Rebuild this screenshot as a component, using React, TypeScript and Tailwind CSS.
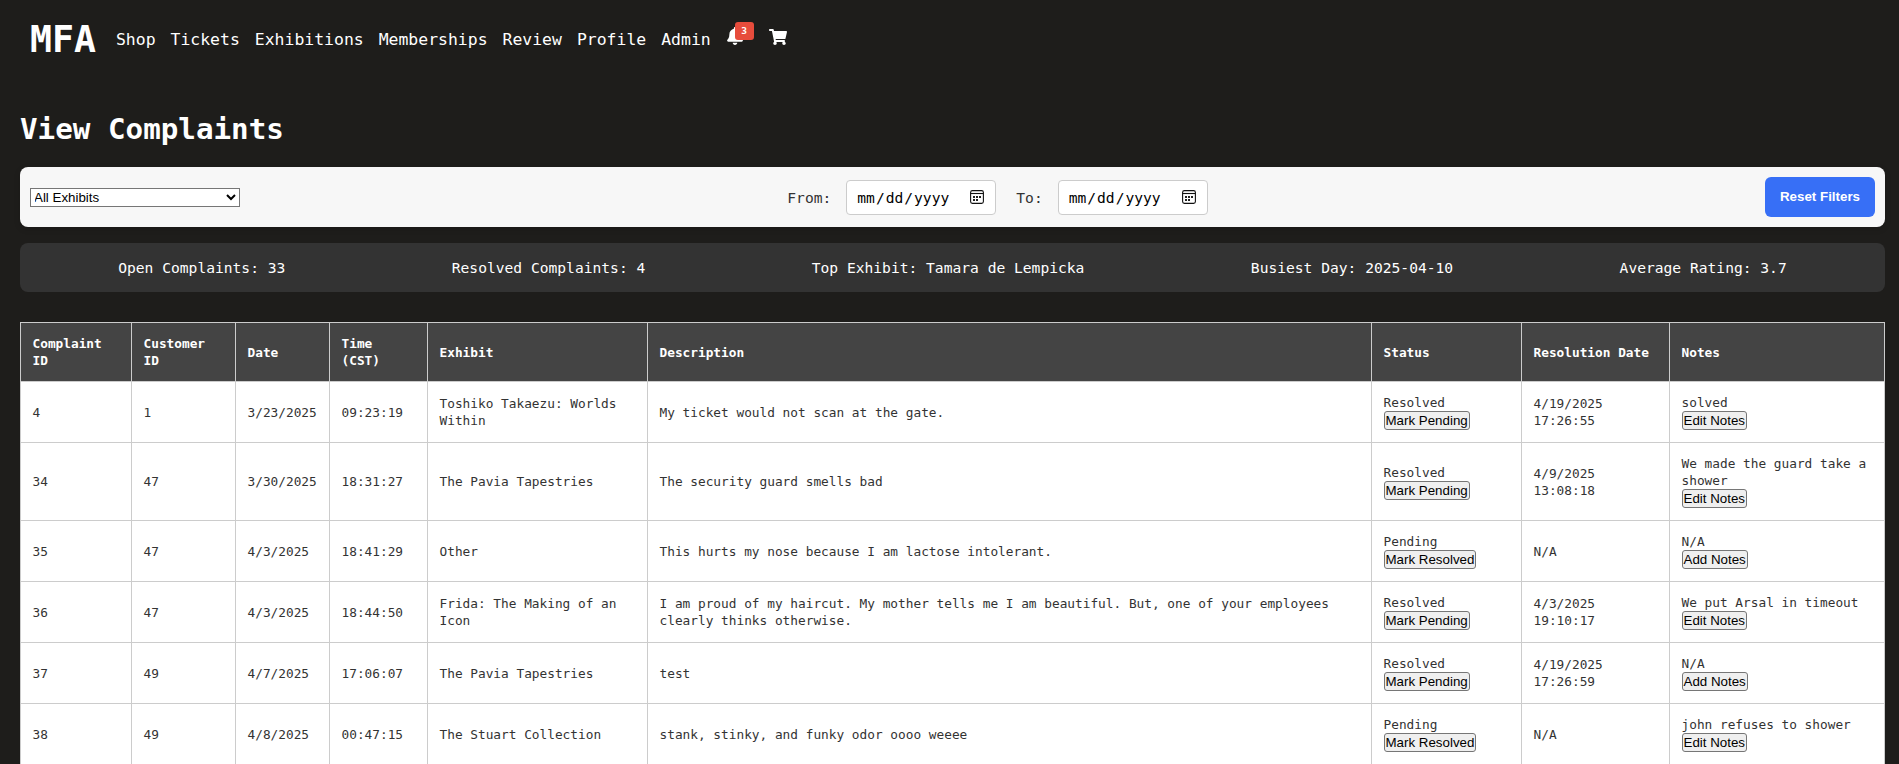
import React from "react";
import { FaBell, FaShoppingCart } from "react-icons/fa";

const navLinks = ["Shop", "Tickets", "Exhibitions", "Memberships", "Review", "Profile", "Admin"];

const stats = [
  "Open Complaints: 33",
  "Resolved Complaints: 4",
  "Top Exhibit: Tamara de Lempicka",
  "Busiest Day: 2025-04-10",
  "Average Rating: 3.7",
];

const headers = [
  "Complaint ID",
  "Customer ID",
  "Date",
  "Time (CST)",
  "Exhibit",
  "Description",
  "Status",
  "Resolution Date",
  "Notes",
];

interface Complaint {
  id: number;
  customer: number;
  date: string;
  time: string;
  exhibit: string;
  description: string;
  resolved: string | null;
  status: "Resolved" | "Pending";
  note: string | null;
}

const complaints: Complaint[] = [
  { id: 4, customer: 1, date: "3/23/2025", time: "09:23:19", exhibit: "Toshiko Takaezu: Worlds Within", description: "My ticket would not scan at the gate.", status: "Resolved", resolved: "4/19/2025 17:26:55", note: "solved" },
  { id: 34, customer: 47, date: "3/30/2025", time: "18:31:27", exhibit: "The Pavia Tapestries", description: "The security guard smells bad", status: "Resolved", resolved: "4/9/2025 13:08:18", note: "We made the guard take a shower" },
  { id: 35, customer: 47, date: "4/3/2025", time: "18:41:29", exhibit: "Other", description: "This hurts my nose because I am lactose intolerant.", status: "Pending", resolved: null, note: null },
  { id: 36, customer: 47, date: "4/3/2025", time: "18:44:50", exhibit: "Frida: The Making of an Icon", description: "I am proud of my haircut. My mother tells me I am beautiful. But, one of your employees clearly thinks otherwise.", status: "Resolved", resolved: "4/3/2025 19:10:17", note: "We put Arsal in timeout" },
  { id: 37, customer: 49, date: "4/7/2025", time: "17:06:07", exhibit: "The Pavia Tapestries", description: "test", status: "Resolved", resolved: "4/19/2025 17:26:59", note: null },
  { id: 38, customer: 49, date: "4/8/2025", time: "00:47:15", exhibit: "The Stuart Collection", description: "stank, stinky, and funky odor oooo weeee", status: "Pending", resolved: null, note: "john refuses to shower" },
];

function CellButton({ children }: { children: React.ReactNode }) {
  return (
    <button className="block h-[19px] rounded-[3px] border border-[#767676] bg-[#efefef] px-px font-['Liberation_Sans',sans-serif] text-[13.333px] leading-[17px] whitespace-nowrap text-black">
      {children}
    </button>
  );
}

function Cell({ children }: { children: React.ReactNode }) {
  return <td className="border border-[#ccc] py-3 pr-3 pl-[11.5px] align-middle">{children}</td>;
}

function CalendarIcon() {
  return (
    <svg
      width="14"
      height="14"
      viewBox="0 0 14 14"
      className="pointer-events-none absolute top-[10px] right-[12px]"
      aria-hidden="true"
    >
      <rect x="0.6" y="0.6" width="12.8" height="12.8" rx="1.8" fill="none" stroke="#111" strokeWidth="1.1" />
      <path d="M0.6 3.5h12.8" stroke="#111" strokeWidth="1.1" />
      <g fill="#222">
        <rect x="3" y="6" width="2" height="2" />
        <rect x="6" y="6" width="2" height="2" />
        <rect x="9" y="6" width="2" height="2" />
        <rect x="3" y="9" width="2" height="2" />
        <rect x="6" y="9" width="2" height="2" />
      </g>
    </svg>
  );
}

function DateField({ label }: { label: string }) {
  return (
    <label className="flex items-center gap-[15px]">
      <span className="pt-px text-[14.61px] leading-[19px] text-[#333]">{label}</span>
      <span className="relative block h-[35px]">
        <input
          type="date"
          className="h-[35px] w-[150px] rounded-[4px] border border-[#ccc] bg-white px-[9px] pt-px text-[14.61px] text-black [&::-webkit-calendar-picker-indicator]:opacity-0"
        />
        <CalendarIcon />
      </span>
    </label>
  );
}

export default function App() {
  return (
    <div className="h-[764px] overflow-hidden bg-[#1e1d1b] font-['DejaVu_Sans_Mono',monospace]">
      <header className="flex h-[79px] items-center pl-[30px] text-white">
        <div className="mr-[20px] pt-px text-[36.5px] leading-none font-bold">MFA</div>
        <nav className="flex items-center gap-[15px] pt-px text-[16.44px] leading-none">
          {navLinks.map((l) => (
            <a key={l} href="#">{l}</a>
          ))}
          <a href="#" className="relative -top-[4px]">
            <FaBell size={18} />
            <span className="absolute -top-[5px] left-[9px] flex h-[18px] w-[19px] items-center justify-center rounded-[3px] bg-[#e74c3c] pb-px text-[9.5px] leading-none font-bold">
              3
            </span>
          </a>
          <a href="#" className="-mt-[7px] ml-[10px]">
            <FaShoppingCart size={18} />
          </a>
        </nav>
      </header>

      <main className="pt-[31px] pr-[14px] pl-5">
        <h1 className="mb-[19px] text-[29.23px] leading-[38px] font-bold text-white">View Complaints</h1>

        <section className="flex h-[60px] items-center justify-between rounded-lg bg-[#f7f7f7] p-2.5 shadow-[0_2px_6px_rgba(0,0,0,0.15)]">
          <select className="h-[19px] w-[210px] rounded-none border border-[#767676] bg-white -indent-px font-['Liberation_Sans',sans-serif] text-[13.333px] text-black">
            <option>All Exhibits</option>
          </select>
          <div className="mr-[10px] flex items-center gap-5">
            <DateField label="From:" />
            <DateField label="To:" />
          </div>
          <button className="h-10 w-[110px] rounded-md bg-[#376ff6] font-['Liberation_Sans',sans-serif] text-[13.333px] font-bold text-white">
            Reset Filters
          </button>
        </section>

        <section className="mt-4 flex h-[49px] items-center justify-around rounded-lg bg-[#333] px-[15px] text-[14.61px] leading-[19px] text-white">
          {stats.map((s) => (
            <span key={s}>{s}</span>
          ))}
        </section>

        <table className="mt-[30px] w-[1865px] table-fixed border-collapse bg-white text-[12.79px] leading-[17px] text-[#333]">
          <colgroup>
            <col className="w-[111px]" />
            <col className="w-[104px]" />
            <col className="w-[94px]" />
            <col className="w-[98px]" />
            <col className="w-[220px]" />
            <col className="w-[724px]" />
            <col className="w-[150px]" />
            <col className="w-[148px]" />
            <col className="w-[215px]" />
          </colgroup>
          <thead>
            <tr className="bg-[#444] text-left text-white">
              {headers.map((h) => (
                <th key={h} className="border border-[#ccc] py-3 pr-3 pl-[11.5px] font-bold">{h}</th>
              ))}
            </tr>
          </thead>
          <tbody>
            {complaints.map((c) => (
              <tr key={c.id}>
                <Cell>{c.id}</Cell>
                <Cell>{c.customer}</Cell>
                <Cell>{c.date}</Cell>
                <Cell>{c.time}</Cell>
                <Cell>{c.exhibit}</Cell>
                <Cell>{c.description}</Cell>
                <Cell>
                  {c.status}
                  <CellButton>{c.status === "Resolved" ? "Mark Pending" : "Mark Resolved"}</CellButton>
                </Cell>
                <Cell>{c.resolved ?? "N/A"}</Cell>
                <Cell>
                  {c.note ?? "N/A"}
                  <CellButton>{c.note ? "Edit Notes" : "Add Notes"}</CellButton>
                </Cell>
              </tr>
            ))}
          </tbody>
        </table>
      </main>
    </div>
  );
}
